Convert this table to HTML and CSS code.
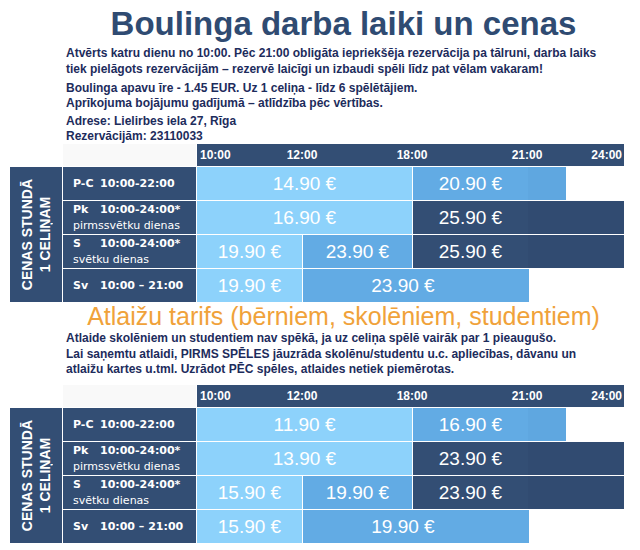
FILE: index.html
```html
<!DOCTYPE html>
<html lang="lv">
<head>
<meta charset="utf-8">
<title>Boulinga darba laiki un cenas</title>
<link rel="stylesheet" href="styles.css">
</head>
<body>
<div class="page">
  <section class="intro">
    <h1 class="title">Boulinga darba laiki un cenas</h1>
    <p class="info first">Atvērts katru dienu no 10:00. Pēc 21:00 obligāta iepriekšēja rezervācija pa tālruni, darba laiks<br>tiek pielāgots rezervācijām – rezervē laicīgi un izbaudi spēli līdz pat vēlam vakaram!</p>
    <p class="info second">Boulinga apavu īre - 1.45 EUR. Uz 1 celiņa - līdz 6 spēlētājiem.<br>Aprīkojuma bojājumu gadījumā – atlīdzība pēc vērtības.</p>
    <p class="info third">Adrese: Lielirbes iela 27, Rīga<br>Rezervācijām: 23110033</p>
  </section>

  <div class="prices">
    <div class="corner"></div>
    <div class="axis">
      <span class="tick t10">10:00</span><span class="tick t12">12:00</span><span class="tick t18">18:00</span><span class="tick t21">21:00</span><span class="tick t24">24:00</span>
    </div>
    <div class="side"><span>CENAS STUNDĀ<br>1 CELIŅAM</span></div>

    <div class="day"><b><span class="dname">P-C</span>10:00-22:00</b></div>
    <div class="slots">
      <div class="cell light w-long">14.90 €</div><div class="cell mid w-eve gap">20.90 €</div><div class="cell mid2 w-tail1"></div>
    </div>

    <div class="day"><b><span class="dname">Pk</span>10:00-24:00*</b><span class="note">pirmssvētku dienas</span></div>
    <div class="slots">
      <div class="cell light w-long">16.90 €</div><div class="cell dark w-eve gap">25.90 €</div><div class="cell dark2 w-tail2"></div>
    </div>

    <div class="day"><b><span class="dname">S</span>10:00-24:00*</b><span class="note">svētku dienas</span></div>
    <div class="slots">
      <div class="cell light w-morn">19.90 €</div><div class="cell mid w-day gap">23.90 €</div><div class="cell dark w-eve gap">25.90 €</div><div class="cell dark2 w-tail2"></div>
    </div>

    <div class="day"><b><span class="dname">Sv</span>10:00 – 21:00</b></div>
    <div class="slots">
      <div class="cell light w-morn">19.90 €</div><div class="cell mid w-sun gap">23.90 €</div>
    </div>
  </div>

  <section class="discount">
    <h2 class="subtitle">Atlaižu tarifs (bērniem, skolēniem, studentiem)</h2>
    <p class="info d1">Atlaide skolēniem un studentiem nav spēkā, ja uz celiņa spēlē vairāk par 1 pieaugušo.</p>
    <p class="info d2">Lai saņemtu atlaidi, PIRMS SPĒLES jāuzrāda skolēnu/studentu u.c. apliecības, dāvanu un<br>atlaižu kartes u.tml. Uzrādot PĒC spēles, atlaides netiek piemērotas.</p>
  </section>

  <div class="prices">
    <div class="corner"></div>
    <div class="axis">
      <span class="tick t10">10:00</span><span class="tick t12">12:00</span><span class="tick t18">18:00</span><span class="tick t21">21:00</span><span class="tick t24">24:00</span>
    </div>
    <div class="side"><span>CENAS STUNDĀ<br>1 CELIŅAM</span></div>

    <div class="day"><b><span class="dname">P-C</span>10:00-22:00</b></div>
    <div class="slots">
      <div class="cell light w-long">11.90 €</div><div class="cell mid w-eve gap">16.90 €</div><div class="cell mid2 w-tail1"></div>
    </div>

    <div class="day"><b><span class="dname">Pk</span>10:00-24:00*</b><span class="note">pirmssvētku dienas</span></div>
    <div class="slots">
      <div class="cell light w-long">13.90 €</div><div class="cell dark w-eve gap">23.90 €</div><div class="cell dark2 w-tail2"></div>
    </div>

    <div class="day"><b><span class="dname">S</span>10:00-24:00*</b><span class="note">svētku dienas</span></div>
    <div class="slots">
      <div class="cell light w-morn">15.90 €</div><div class="cell mid w-day gap">19.90 €</div><div class="cell dark w-eve gap">23.90 €</div><div class="cell dark2 w-tail2"></div>
    </div>

    <div class="day"><b><span class="dname">Sv</span>10:00 – 21:00</b></div>
    <div class="slots">
      <div class="cell light w-morn">15.90 €</div><div class="cell mid w-sun gap">19.90 €</div>
    </div>
  </div>
</div>
</body>
</html>
```

FILE: styles.css
```css
* { box-sizing: border-box; }

html, body {
  margin: 0;
  padding: 0;
  background: #ffffff;
}

body {
  font-family: "Liberation Sans", Arial, sans-serif;
  width: 640px;
  height: 550px;
  overflow: hidden;
}

.page {
  display: flex;
  flex-direction: column;
}

/* ---------- intro ---------- */
.intro,
.discount {
  margin-left: 63px;
  width: 561px;
  display: flex;
  flex-direction: column;
}

.title {
  margin: 0;
  padding-top: 5px;
  font-size: 33px;
  line-height: 38px;
  font-weight: bold;
  color: #2f4b72;
  text-align: center;
}

.info {
  margin: 0;
  padding-left: 3px;
  font-size: 12px;
  font-weight: bold;
  color: #1d2c5c;
  white-space: nowrap;
}

.info.first { margin-top: 2px; line-height: 16px; }
.info.second { margin-top: 4px; line-height: 15px; }
.info.third { margin-top: 3px; line-height: 15px; }

/* ---------- discount ---------- */
.subtitle {
  margin: 0;
  font-size: 25px;
  line-height: 28px;
  font-weight: normal;
  color: #f0a23a;
  text-align: center;
}

.info.d1 { line-height: 16px; }
.info.d2 { margin-top: 1px; line-height: 15px; }

.discount { margin-bottom: 8px; }

/* ---------- price table ---------- */
.prices {
  margin-left: 10px;
  width: 614px;
  display: grid;
  grid-template-columns: 52px 133px 427px;
  grid-template-rows: 22px repeat(4, 33px);
  column-gap: 1px;
  row-gap: 1px;
}

.corner {
  grid-column: 2;
  grid-row: 1;
  background: #f9f9f9;
}

.axis {
  grid-column: 3;
  grid-row: 1;
  background: #334e74;
  display: flex;
  align-items: center;
  color: #ffffff;
  font-size: 12px;
  font-weight: bold;
}

.tick { display: block; text-align: center; }
.t10 { width: 53px; text-align: left; padding-left: 3px; }
.t12 { width: 104px; }
.t18 { width: 116px; }
.t21 { width: 114px; }
.t24 { width: 40px; text-align: right; padding-right: 2px; }

.side {
  grid-column: 1;
  grid-row: 2 / span 4;
  background: #334e74;
  color: #ffffff;
  display: flex;
  align-items: center;
  justify-content: center;
}

.side span {
  writing-mode: vertical-rl;
  transform: rotate(180deg);
  text-align: center;
  font-size: 14px;
  line-height: 18px;
  font-weight: bold;
}

.day {
  grid-column: 2;
  background: #334e74;
  color: #ffffff;
  font-family: "DejaVu Sans", Verdana, sans-serif;
  font-size: 11px;
  line-height: 16px;
  display: flex;
  flex-direction: column;
  justify-content: center;
  padding-left: 10px;
}

.day b { font-weight: bold; white-space: nowrap; }
.dname { display: inline-block; width: 27px; }
.note { font-weight: normal; white-space: nowrap; }

.slots {
  grid-column: 3;
  display: flex;
}

.cell {
  height: 33px;
  display: flex;
  align-items: center;
  justify-content: center;
  color: #ffffff;
  font-size: 19px;
  white-space: nowrap;
}

.cell.gap { margin-left: 1px; }

.light { background: #8dd2fb; }
.mid { background: #62abe4; }
.mid2 { background: #5fa7e0; }
.dark { background: #334e74; }
.dark2 { background: #314b71; }

.w-long { width: 215px; }
.w-morn { width: 105px; }
.w-day { width: 109px; }
.w-eve { width: 115px; }
.w-tail1 { width: 38px; }
.w-tail2 { width: 96px; }
.w-sun { width: 226px; padding-right: 26px; }
```
